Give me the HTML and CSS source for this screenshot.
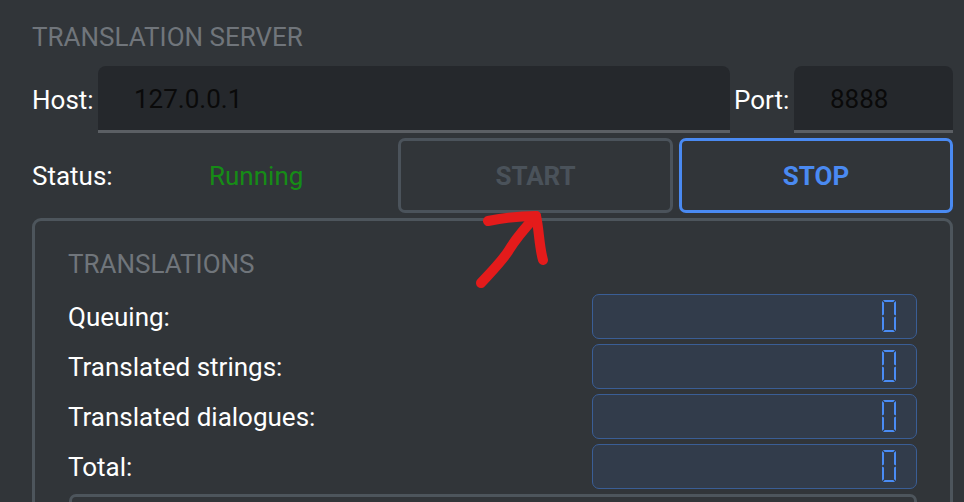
FILE: index.html
```html
<!DOCTYPE html>
<html lang="en">
<head>
<meta charset="utf-8">
<title>Translation Server</title>
<link rel="stylesheet" href="styles.css">
</head>
<body>
<div class="app">
  <div class="section-title">TRANSLATION SERVER</div>
  <div class="row host-row">
    <span class="label host-label">Host:</span>
    <div class="field host-field">127.0.0.1</div>
    <span class="label port-label">Port:</span>
    <div class="field port-field">8888</div>
  </div>
  <div class="row status-row">
    <span class="label status-label">Status:</span>
    <span class="status-value">Running</span>
    <button class="btn btn-start">START</button>
    <button class="btn btn-stop">STOP</button>
  </div>
  <div class="group">
    <div class="group-title">TRANSLATIONS</div>
    <div class="stats">
      <span class="label">Queuing:</span>
      <div class="lcd"><svg class="digit" viewBox="0 0 14 32"><use href="#zero"/></svg></div>
      <span class="label">Translated strings:</span>
      <div class="lcd"><svg class="digit" viewBox="0 0 14 32"><use href="#zero"/></svg></div>
      <span class="label">Translated dialogues:</span>
      <div class="lcd"><svg class="digit" viewBox="0 0 14 32"><use href="#zero"/></svg></div>
      <span class="label">Total:</span>
      <div class="lcd"><svg class="digit" viewBox="0 0 14 32"><use href="#zero"/></svg></div>
    </div>
    <div class="subgroup"></div>
  </div>

  <svg class="annotation" width="80" height="80" viewBox="0 0 80 80">
    <path d="M10 75 C 22 62, 32 52, 38 42 C 44 32, 52 22, 65 8" />
    <path d="M17 13 C 32 10, 50 8, 65 8 C 68 20, 68 38, 72 52" />
  </svg>

  <svg width="0" height="0" class="defs">
    <defs>
      <g id="zero" fill="#4a8cf5">
        <polygon points="1,0 13,0 11.3,2 2.7,2"/>
        <polygon points="0,1 2,2.7 2,14.5 0,15.5"/>
        <polygon points="14,1 12,2.7 12,14.5 14,15.5"/>
        <polygon points="0,16.5 2,17.5 2,29.3 0,31"/>
        <polygon points="14,16.5 12,17.5 12,29.3 14,31"/>
        <polygon points="2.7,30 11.3,30 13,32 1,32"/>
      </g>
    </defs>
  </svg>
</div>
</body>
</html>
```

FILE: styles.css
```css
html, body {
  margin: 0;
  padding: 0;
  background: #313539;
  overflow: hidden;
}

body {
  width: 964px;
  height: 502px;
  font-family: Roboto, "Liberation Sans", sans-serif;
  font-size: 26px;
  line-height: 30px;
  color: #ffffff;
}

.app {
  position: relative;
  padding: 22px 11px 0 32px;
  height: 502px;
  box-sizing: border-box;
}

.section-title {
  color: #70757b;
  height: 30px;
}

.row {
  display: flex;
  align-items: center;
}

.host-row {
  margin-top: 14px;
  height: 67px;
}

.label {
  color: #ffffff;
  white-space: nowrap;
}

.host-label {
  width: 66px;
}

.field {
  height: 67px;
  box-sizing: border-box;
  background: #25282c;
  border-bottom: 3px solid #5b5f64;
  border-radius: 8px 8px 0 0;
  padding-left: 36px;
  display: flex;
  align-items: center;
  color: #0a0a0a;
  padding-top: 2px;
}

.host-field {
  flex: 1;
}

.port-label {
  width: 64px;
  padding-left: 4px;
  box-sizing: border-box;
}

.port-field {
  width: 159px;
}

.status-row {
  margin-top: 5px;
  height: 75px;
}

.status-label {
  width: 177px;
}

.status-value {
  flex: 1;
  color: #168c16;
}

.btn {
  font-family: inherit;
  font-size: 26px;
  font-weight: 700;
  height: 75px;
  background: transparent;
  border-radius: 7px;
  border: 3px solid;
  padding: 0;
  box-sizing: border-box;
}

.btn-start {
  width: 275px;
  border-color: #4b535b;
  color: #4a525a;
}

.btn-stop {
  width: 274px;
  margin-left: 6px;
  border-color: #4a8af2;
  color: #4a8af2;
}

.group {
  margin-top: 5px;
  border: 3px solid #4d555c;
  border-radius: 9px;
  padding: 28px 33px 0 33px;
  height: 400px;
}

.group-title {
  color: #70757b;
  height: 30px;
}

.stats {
  margin-top: 15px;
  display: grid;
  grid-template-columns: 1fr 325px;
  row-gap: 5px;
  align-items: center;
}

.lcd {
  height: 45px;
  box-sizing: border-box;
  background: #323c4b;
  border: 1.5px solid #3a5e96;
  border-radius: 7px;
  display: flex;
  justify-content: flex-end;
  align-items: flex-start;
  padding: 5px 20px 0 0;
}

.digit {
  width: 14px;
  height: 32px;
  display: block;
}

.subgroup {
  margin-top: 5px;
  margin-left: 1px;
  height: 80px;
  border: 3px solid #4d555c;
  border-radius: 7px;
}

.annotation {
  position: absolute;
  left: 471px;
  top: 208px;
  overflow: visible;
}

.annotation path {
  fill: none;
  stroke: #e41b1b;
  stroke-width: 10;
  stroke-linecap: round;
  stroke-linejoin: round;
}

.defs {
  position: absolute;
}
```
